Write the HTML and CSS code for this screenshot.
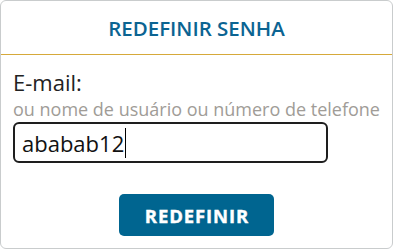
FILE: index.html
```html
<!DOCTYPE html>
<html lang="pt">
<head>
<meta charset="utf-8">
<link rel="stylesheet" href="styles.css">
</head>
<body>
<div class="card">
  <div class="card-header">
    <h1 class="title">REDEFINIR SENHA</h1>
  </div>
  <div class="card-body">
    <label class="label" for="email">E-mail:</label>
    <div class="hint">ou nome de usuário ou número de telefone</div>
    <div class="input"><span class="value">ababab12</span><span class="caret"></span></div>
    <div class="actions">
      <button class="btn">REDEFINIR</button>
    </div>
  </div>
</div>
</body>
</html>
```
FILE: styles.css
```css
* { box-sizing: border-box; }
html, body { margin: 0; padding: 0; background: #ffffff; }
body { font-family: "Open Sans", sans-serif; }
.card {
  width: 393px;
  height: 249px;
  border: 1px solid #c9cccd;
  border-radius: 6px;
  background: #fff;
}
.card-header {
  height: 54px;
  border-bottom: 1px solid #d6a93a;
  display: flex;
  align-items: center;
  justify-content: center;
}
.title {
  margin: 0;
  font-size: 20.5px;
  line-height: 28px;
  font-weight: 600;
  color: #0b6492;
}
.card-body {
  padding: 13px 12px 0 12px;
}
.label {
  display: block;
  font-size: 22px;
  line-height: 28px;
  color: #222;
}
.hint {
  font-size: 18px;
  line-height: 26px;
  color: #a09c97;
  white-space: nowrap;
}
.input {
  width: 315px;
  height: 41px;
  border: 2px solid #1e1e1e;
  border-radius: 6px;
  display: flex;
  align-items: center;
  padding-left: 7px;
  font-size: 22px;
  color: #111;
}
.caret {
  display: inline-block;
  width: 1px;
  height: 30px;
  background: #000;
  margin-left: 1px;
}
.actions {
  display: flex;
  justify-content: center;
  margin-top: 31px;
}
.btn {
  width: 155px;
  height: 42px;
  border: none;
  border-radius: 5px;
  background: #006590;
  color: #fff;
  font-family: "Open Sans", sans-serif;
  font-weight: 700;
  font-size: 18.5px;
  letter-spacing: 0.9px;
  -webkit-text-stroke: 0.4px #fff;
  padding: 0 0 0 1px;
}
```
